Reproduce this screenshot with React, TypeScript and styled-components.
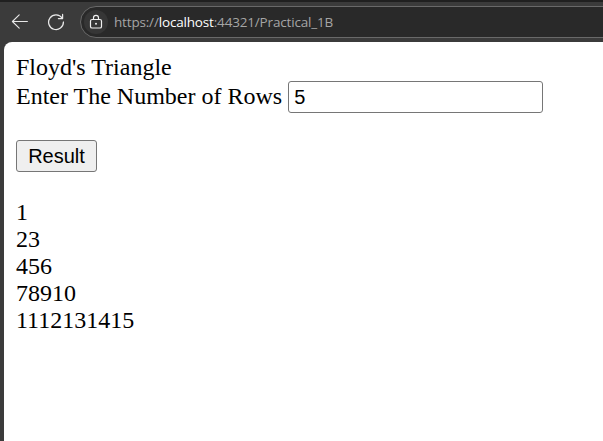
import React from "react";
import styled, { createGlobalStyle } from "styled-components";

const GlobalStyle = createGlobalStyle`
  *, *::before, *::after { box-sizing: border-box; }
  body { margin: 0; background: #3b3a39; overflow: hidden; }
`;

const Browser = styled.div`
  display: flex;
  flex-direction: column;
  height: 100vh;
  background: #3b3b3b;
  border-top: 2px solid #202020;
  overflow: hidden;
`;

const Toolbar = styled.header`
  display: flex;
  flex: none;
  height: 40px;
  padding-top: 4px;
  overflow: hidden;
`;

const NavButton = styled.button`
  flex: none;
  display: flex;
  align-items: center;
  justify-content: center;
  width: 36px;
  height: 32px;
  padding: 0;
  border: 0;
  background: none;
  color: #e8e8e8;
`;

const NavGroup = styled.nav`
  display: flex;
  flex: none;
  width: 80px;
  padding-left: 2px;
`;

const AddressBar = styled.div`
  flex: none;
  display: flex;
  align-items: center;
  width: 640px;
  height: 32px;
  padding-left: 3px;
  border: 1px solid #696969;
  border-radius: 16px;
  background: #292929;
`;

const SiteInfo = styled.span`
  display: flex;
  align-items: center;
  justify-content: center;
  width: 24px;
  height: 24px;
  border-radius: 50%;
  background: #363636;
  color: #f0f0f0;
`;

const Url = styled.span`
  margin-left: 6px;
  font: 13.5px/20px "Open Sans", "Noto Sans", sans-serif;
  letter-spacing: -0.17px;
  white-space: nowrap;
  color: #a5a5a5;
`;

const Host = styled.span`
  color: #ffffff;
`;

const Page = styled.main`
  flex: 1;
  margin-left: 4px;
  padding: 12px;
  border-top-left-radius: 8px;
  background: #ffffff;
  color: #000000;
  font: 24px/27px "Liberation Serif", "Times New Roman", serif;
`;

const Title = styled.div`
  height: 27px;
`;

const Field = styled.label`
  display: flex;
  align-items: center;
  height: 32px;
  white-space: nowrap;
`;

const FieldLabel = styled.span`
  padding-bottom: 2px;
`;

const RowsInput = styled.input`
  width: 255px;
  height: 32px;
  margin-left: 6px;
  padding: 1px 5px;
  border: 1px solid #767676;
  border-radius: 3px;
  background: #ffffff;
  color: #000000;
  font: 20px "Liberation Sans", Arial, sans-serif;
  outline: 0;
`;

const ResultButton = styled.button`
  display: block;
  width: 81px;
  height: 32px;
  margin: 27px 0;
  padding: 0;
  border: 1px solid #767676;
  border-radius: 3px;
  background: #efefef;
  color: #000000;
  font: 20px "Liberation Sans", Arial, sans-serif;
`;

const TriangleRow = styled.div`
  height: 27px;
`;

const rows = ["1", "23", "456", "78910", "1112131415"];

export default function App() {
  return (
    <>
      <GlobalStyle />
      <Browser>
        <Toolbar>
          <NavGroup>
            <NavButton aria-label="Back">
              <svg width="18" height="16" viewBox="0 0 18 16" fill="none" stroke="currentColor" strokeWidth="1.1" strokeLinecap="round" strokeLinejoin="round">
                <path d="M8.2 0.8 1.4 7.5 8.2 14.2M1.4 7.5H16.4" />
              </svg>
            </NavButton>
            <NavButton aria-label="Refresh">
              <svg width="18" height="18" viewBox="0 0 18 18" fill="none" stroke="currentColor" strokeWidth="1.25" strokeLinecap="round" strokeLinejoin="round">
                <path d="M15.1 5A7.4 7.4 0 1 0 16.4 9M15.6 1.4V5.5H11.4" />
              </svg>
            </NavButton>
          </NavGroup>
          <AddressBar>
            <SiteInfo>
              <svg width="14" height="16" viewBox="0 0 14 16" fill="none" stroke="currentColor" strokeWidth="1.2">
                <rect x="1.5" y="5.5" width="11" height="8.5" rx="1.6" />
                <path d="M4.5 5.5V3.8a2.5 2.5 0 0 1 5 0v1.7" />
                <circle cx="7" cy="9.7" r="1" fill="currentColor" stroke="none" />
              </svg>
            </SiteInfo>
            <Url>
              https://<Host>localhost</Host>:44321/Practical_1B
            </Url>
          </AddressBar>
        </Toolbar>
        <Page>
          <Title>Floyd's Triangle</Title>
          <Field>
            <FieldLabel>Enter The Number of Rows</FieldLabel>
            <RowsInput type="text" defaultValue="5" />
          </Field>
          <ResultButton type="button">Result</ResultButton>
          {rows.map((row) => (
            <TriangleRow key={row}>{row}</TriangleRow>
          ))}
        </Page>
      </Browser>
    </>
  );
}
